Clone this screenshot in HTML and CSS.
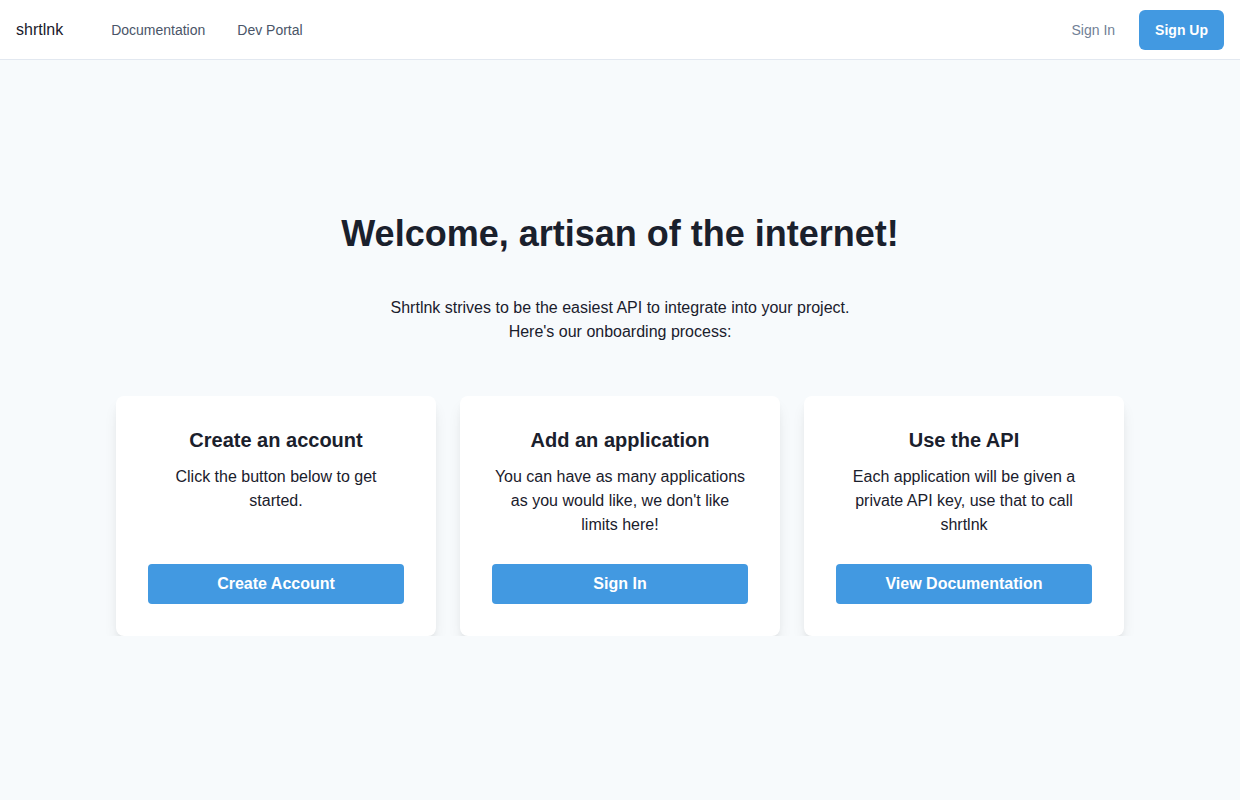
FILE: index.html
```html
<!DOCTYPE html>
<html lang="en">
<head>
  <meta charset="UTF-8">
  <meta name="viewport" content="width=device-width, initial-scale=1.0">
  <title>shrtlnk</title>
  <link rel="stylesheet" href="styles.css">
</head>
<body>
  <!-- Header -->
  <header class="topbar">
    <nav class="nav-left">
      <a class="logo" href="#">shrtlnk</a>
      <a class="nav-link" href="#">Documentation</a>
      <a class="nav-link" href="#">Dev Portal</a>
    </nav>
    <div class="nav-right">
      <a class="signin" href="#">Sign In</a>
      <a class="signup" href="#">Sign Up</a>
    </div>
  </header>

  <!-- Welcome -->
  <main class="welcome">
    <h1>Welcome, artisan of the internet!</h1>
    <p class="intro">Shrtlnk strives to be the easiest API to integrate into your project.<br>Here's our onboarding process:</p>

    <div class="steps">
      <div class="card">
        <h2>Create an account</h2>
        <p>Click the button below to get started.</p>
        <a class="btn" href="#">Create Account</a>
      </div>
      <div class="card">
        <h2>Add an application</h2>
        <p>You can have as many applications as you would like, we don't like limits here!</p>
        <a class="btn" href="#">Sign In</a>
      </div>
      <div class="card">
        <h2>Use the API</h2>
        <p>Each application will be given a private API key, use that to call shrtlnk</p>
        <a class="btn" href="#">View Documentation</a>
      </div>
    </div>
  </main>
</body>
</html>
```

FILE: styles.css
```css
body {
  font-family: "Liberation Sans", Arial, sans-serif;
  background-color: #f7fafc;
  margin: 0;
  color: #1a202c;
}
a {
  text-decoration: none;
}
.topbar {
  display: flex;
  align-items: center;
  justify-content: space-between;
  height: 59px;
  padding: 0 16px;
  background-color: #fff;
  border-bottom: 1px solid #e2e8f0;
}
.nav-left {
  display: flex;
  align-items: center;
  margin-top: 1px;
}
.logo {
  color: #1a202c;
  font-size: 16px;
  margin-right: 48px;
}
.nav-link {
  color: #4a5568;
  font-size: 14px;
  margin-right: 32px;
}
.nav-right {
  display: flex;
  align-items: center;
  gap: 24px;
  margin-top: 1px;
}
.signin {
  color: #718096;
  font-size: 14px;
}
.signup {
  display: block;
  background-color: #4299e1;
  color: #fff;
  font-size: 14px;
  font-weight: bold;
  line-height: 40px;
  padding: 0 16px;
  border-radius: 6px;
}
.welcome {
  display: flex;
  flex-direction: column;
  align-items: center;
  padding-top: 154px;
  text-align: center;
}
h1 {
  font-size: 36px;
  line-height: 40px;
  margin: 0 0 42px;
}
.intro {
  font-size: 16px;
  line-height: 24px;
  margin: 0 0 52px;
}
.steps {
  display: flex;
  gap: 24px;
}
.card {
  display: flex;
  flex-direction: column;
  width: 256px;
  height: 176px;
  padding: 32px;
  background-color: #fff;
  border-radius: 8px;
  box-shadow: 0 10px 15px -3px rgba(0, 0, 0, 0.1), 0 4px 6px -2px rgba(0, 0, 0, 0.05);
}
.card h2 {
  font-size: 20px;
  line-height: 24px;
  margin: 0 0 13px;
}
.card p {
  font-size: 16px;
  line-height: 24px;
  margin: 0;
}
.btn {
  display: block;
  margin-top: auto;
  background-color: #4299e1;
  color: #fff;
  font-size: 16px;
  font-weight: bold;
  line-height: 40px;
  border-radius: 4px;
}
```
